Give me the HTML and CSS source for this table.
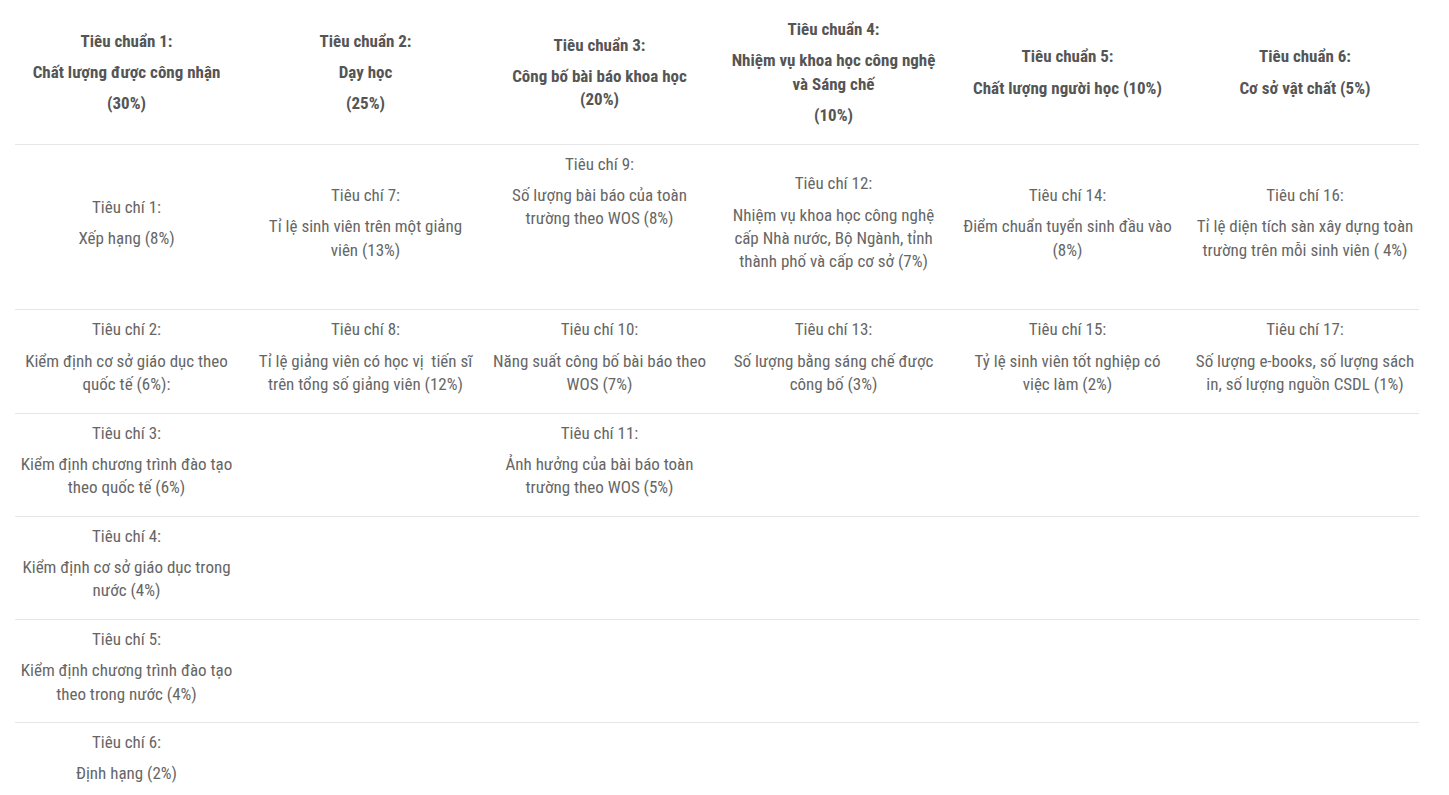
FILE: index.html
```html
<!DOCTYPE html>
<html lang="vi">
<head>
<meta charset="utf-8">
<title>Tiêu chuẩn</title>
<link rel="stylesheet" href="styles.css">
</head>
<body>
<div class="page">
<table class="criteria">
<colgroup>
<col class="c1"><col class="c2"><col class="c3"><col class="c4"><col class="c5"><col class="c6">
</colgroup>
<thead>
<tr>
<th><p>Tiêu chuẩn 1:</p><p>Chất lượng được công nhận</p><p>(30%)</p></th>
<th><p>Tiêu chuẩn 2:</p><p>Dạy học</p><p>(25%)</p></th>
<th><p>Tiêu chuẩn 3:</p><p>Công bố bài báo khoa học<br>(20%)</p></th>
<th><p>Tiêu chuẩn 4:</p><p>Nhiệm vụ khoa học công nghệ<br>và Sáng chế</p><p>(10%)</p></th>
<th><p>Tiêu chuẩn 5:</p><p>Chất lượng người học (10%)</p></th>
<th><p>Tiêu chuẩn 6:</p><p>Cơ sở vật chất (5%)</p></th>
</tr>
</thead>
<tbody>
<tr>
<td><p>Tiêu chí 1:</p><p>Xếp hạng (8%)</p></td>
<td><p>Tiêu chí 7:</p><p>Tỉ lệ sinh viên trên một giảng<br>viên (13%)</p></td>
<td><p>Tiêu chí 9:</p><p>Số lượng bài báo của toàn<br>trường theo WOS (8%)</p><p>&nbsp;</p><p>&nbsp;</p></td>
<td><p>Tiêu chí 12:</p><p>Nhiệm vụ khoa học công nghệ<br>cấp Nhà nước, Bộ Ngành, tỉnh<br>thành phố và cấp cơ sở (7%)</p></td>
<td><p>Tiêu chí 14:</p><p>Điểm chuẩn tuyển sinh đầu vào<br>(8%)</p></td>
<td><p>Tiêu chí 16:</p><p>Tỉ lệ diện tích sàn xây dựng toàn<br>trường trên mỗi sinh viên ( 4%)</p></td>
</tr>
<tr>
<td><p>Tiêu chí 2:</p><p>Kiểm định cơ sở giáo dục theo<br>quốc tế (6%):</p></td>
<td><p>Tiêu chí 8:</p><p>Tỉ lệ giảng viên có học vị&nbsp; tiến sĩ<br>trên tổng số giảng viên (12%)</p></td>
<td><p>Tiêu chí 10:</p><p>Năng suất công bố bài báo theo<br>WOS (7%)</p></td>
<td><p>Tiêu chí 13:</p><p>Số lượng bằng sáng chế được<br>công bố (3%)</p></td>
<td><p>Tiêu chí 15:</p><p>Tỷ lệ sinh viên tốt nghiệp có<br>việc làm (2%)</p></td>
<td><p>Tiêu chí 17:</p><p>Số lượng e-books, số lượng sách<br>in, số lượng nguồn CSDL (1%)</p></td>
</tr>
<tr>
<td><p>Tiêu chí 3:</p><p>Kiểm định chương trình đào tạo<br>theo quốc tế (6%)</p></td>
<td></td>
<td><p>Tiêu chí 11:</p><p>Ảnh hưởng của bài báo toàn<br>trường theo WOS (5%)</p></td>
<td></td>
<td></td>
<td></td>
</tr>
<tr>
<td><p>Tiêu chí 4:</p><p>Kiểm định cơ sở giáo dục trong<br>nước (4%)</p></td>
<td></td><td></td><td></td><td></td><td></td>
</tr>
<tr>
<td><p>Tiêu chí 5:</p><p>Kiểm định chương trình đào tạo<br>theo trong nước (4%)</p></td>
<td></td><td></td><td></td><td></td><td></td>
</tr>
<tr>
<td><p>Tiêu chí 6:</p><p>Định hạng (2%)</p></td>
<td></td><td></td><td></td><td></td><td></td>
</tr>
</tbody>
</table>
</div>
</body>
</html>
```

FILE: styles.css
```css
html, body {
  margin: 0;
  padding: 0;
  background: #ffffff;
}

.page {
  padding: 10px 30px 20px 15px;
  font-family: "Roboto Condensed", Roboto, "Liberation Sans", sans-serif;
  font-stretch: condensed;
  font-size: 17px;
  line-height: 1.375;
  color: #666666;
}

.criteria {
  width: 1404px;
  border-collapse: collapse;
  table-layout: fixed;
}

.c1 { width: 223px; }
.c2 { width: 255px; }
.c3 { width: 213px; }
.c4 { width: 255px; }
.c5 { width: 213px; }
.c6 { width: 245px; }

.criteria th,
.criteria td {
  padding: 8px 0;
  text-align: center;
  vertical-align: middle;
}

.criteria th:last-child,
.criteria td:last-child {
  padding-left: 17px;
}

.criteria tbody td {
  border-top: 1px solid #e6e6e6;
}

.criteria thead th {
  font-weight: 700;
  color: #555555;
}

.criteria p {
  margin: 0 0 8px;
  white-space: nowrap;
}
```
